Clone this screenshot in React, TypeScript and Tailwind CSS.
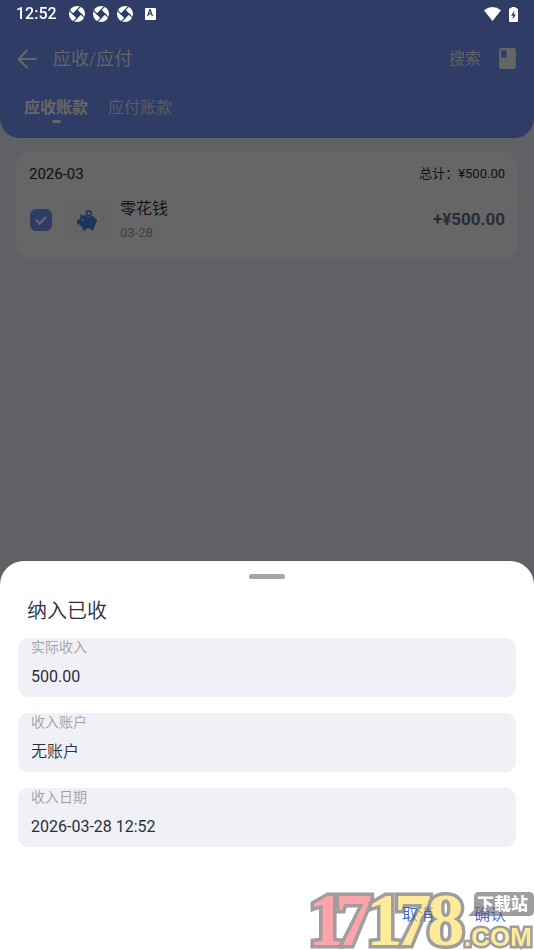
import { useState } from "react";
import { MdBook } from "react-icons/md";

interface Entry {
  id: string;
  name: string;
  date: string;
  amount: string;
}

const entries: Entry[] = [{ id: "e1", name: "零花钱", date: "03-28", amount: "+¥500.00" }];

const tabs = ["应收账款", "应付账款"];

function ApertureIcon() {
  return (
    <svg viewBox="0 0 16 16" className="size-4" aria-hidden="true">
      <circle cx="8" cy="8" r="8" fill="#fff" />
      <path d="M8 3.2 L12.8 8 L8 12.8 L3.2 8 Z" fill="#2f3c66" />
      <g stroke="#2f3c66" strokeWidth="1.1">
        <path d="M8 4 L11.6 0.4" />
        <path d="M12 8 L15.6 11.6" />
        <path d="M8 12 L4.4 15.6" />
        <path d="M4 8 L0.4 4.4" />
      </g>
    </svg>
  );
}

function StatusBar() {
  return (
    <div className="fixed inset-x-0 top-0 z-20 flex h-7 items-center pl-4 pr-4 text-white">
      <span className="text-base font-medium">12:52</span>
      <div className="ml-3 flex items-center gap-2">
        <ApertureIcon />
        <ApertureIcon />
        <ApertureIcon />
      </div>
      <span className="ml-3 flex h-3 w-[11px] items-center justify-center rounded-[1px] bg-white text-[9px] font-bold text-[#2f3c66]">
        A
      </span>
      <svg viewBox="0 0 17 14" className="ml-auto h-[14px] w-[17px]" aria-hidden="true">
        <path d="M8.5 14 L0 3.2 Q8.5 -3 17 3.2 Z" fill="#fff" />
      </svg>
      <svg viewBox="0 0 9 15" className="ml-2 h-[15px] w-[9px]" aria-hidden="true">
        <path d="M2.5 0 H6.5 V1.2 H8 Q9 1.2 9 2.2 V14 Q9 15 8 15 H1 Q0 15 0 14 V2.2 Q0 1.2 1 1.2 H2.5 Z" fill="#fff" />
        <path d="M5.6 3.6 L2 8.8 H4.1 L3.4 12.6 L7 7.4 H4.9 Z" fill="#2f3c66" />
      </svg>
    </div>
  );
}

function PiggyIcon() {
  return (
    <svg viewBox="0 0 20 21" className="h-[21px] w-5" aria-hidden="true">
      <circle cx="11.8" cy="3.4" r="2.4" fill="none" stroke="#4d88e6" strokeWidth="2" />
      <path
        d="M3 4.2 L6.2 5.8 Q8 5 9.4 5.4 Q10.4 7.4 12.4 7.3 Q14.2 7.2 15 5.8 Q17.6 6.6 18.4 9 Q20 9.2 20 10.8 Q20 12.4 19 12.6 Q18.6 15.6 16.8 17.2 V19.4 Q16.8 20.4 15.8 20.4 H14.4 L13.6 18.6 H9 L8.4 20.4 H6.8 Q5.8 20.4 5.7 19.4 L5.2 17.2 Q3.8 16.4 2.8 14.8 L0.8 14 Q0 13.6 0 12.8 V10.8 Q0 10 0.8 10 L2.2 9.6 Q2.6 8.2 3.6 7.4 Z"
        fill="#3f83ee"
      />
      <circle cx="5.8" cy="10" r="0.9" fill="#d8e6ff" />
    </svg>
  );
}

function Header() {
  const [active, setActive] = useState(0);

  return (
    <header className="rounded-b-[20px] bg-[#7696ff] pt-7 text-white">
      <div className="flex h-[61px] items-center pl-[17px] pr-[14px]">
        <button type="button" aria-label="返回">
          <svg viewBox="0 0 20 20" className="size-5" fill="none" stroke="currentColor" strokeWidth="2" aria-hidden="true">
            <path d="M10 1.5 L1.5 10 L10 18.5 M1.5 10 H19" strokeLinecap="round" strokeLinejoin="round" />
          </svg>
        </button>
        <h1 className="ml-4 text-lg font-[350]">应收/应付</h1>
        <button type="button" className="ml-auto text-base font-[350] text-white/90">搜索</button>
        <button type="button" aria-label="账本" className="ml-[14px]">
          <MdBook size={25} />
        </button>
      </div>
      <div className="flex gap-5 px-6 pt-[7px] pb-[15px]">
        {tabs.map((tab, i) => (
          <button
            key={tab}
            type="button"
            onClick={() => setActive(i)}
            className={`flex flex-col items-center text-base leading-6 ${i === active ? "font-bold" : "font-[350] text-white/80"}`}
          >
            {tab}
            {i === active && <span className="h-[3px] w-[9px] rounded-full bg-white" />}
          </button>
        ))}
      </div>
    </header>
  );
}

function MonthCard() {
  return (
    <section className="mx-4 mt-[13px] rounded-[18px] bg-white px-[13px] pt-[13px] pb-4 text-[#272a36]">
      <div className="flex h-5 items-center justify-between">
        <h2 className="text-[15px]">2026-03</h2>
        <p className="text-[13px]">总计：¥500.00</p>
      </div>
      {entries.map((e) => (
        <div key={e.id} className="mt-[13px] flex items-center">
          <label className="relative ml-px flex size-[22px]">
            <input
              type="checkbox"
              defaultChecked
              aria-label={e.name}
              className="peer size-[22px] appearance-none rounded-md bg-[#c8cede] checked:bg-[#7696ff]"
            />
            <svg viewBox="0 0 22 22" className="pointer-events-none absolute inset-0 hidden peer-checked:block" aria-hidden="true">
              <path d="M6 11 L9.6 14.6 L16 8" fill="none" stroke="#fff" strokeWidth="2.4" />
            </svg>
          </label>
          <div className="ml-[15px] flex size-10 items-center justify-center rounded-xl bg-[#fafafa]">
            <PiggyIcon />
          </div>
          <div className="ml-[13px]">
            <p className="text-base leading-6 font-[350]">{e.name}</p>
            <p className="mt-[2px] text-[13px] leading-5 text-[#a0a0a0]">{e.date}</p>
          </div>
          <p className="ml-auto text-[17px] font-bold text-[#667085]">{e.amount}</p>
        </div>
      ))}
    </section>
  );
}

const fieldBox = "flex flex-col rounded-[10px] bg-[#f0f1f6] px-[13px] pb-2";
const fieldLabel = "text-[14px] leading-[18px] font-[350] text-[#a0a0a0]";
const fieldInput = "mt-[9px] h-6 w-full appearance-none bg-transparent text-base leading-6 text-[#2b2e3a] outline-none";

function ReceiveSheet() {
  return (
    <div role="dialog" aria-labelledby="sheet-title" className="relative rounded-t-[24px] bg-white px-[18px] pt-[13px] pb-[21px]">
      <div className="mx-auto h-[5px] w-9 rounded-full bg-[#a5a5a5]" />
      <h2 id="sheet-title" className="mt-[18px] px-[9px] text-xl leading-7 font-[350] text-[#2b2e3a]">纳入已收</h2>
      <form className="mt-[13px] flex flex-col gap-4" onSubmit={(e) => e.preventDefault()}>
        <div className={fieldBox}>
          <label htmlFor="amount" className={fieldLabel}>实际收入</label>
          <input id="amount" defaultValue="500.00" inputMode="decimal" className={fieldInput} />
        </div>
        <div className={fieldBox}>
          <label htmlFor="account" className={fieldLabel}>收入账户</label>
          <select id="account" className={`${fieldInput} font-[350]`}>
            <option>无账户</option>
          </select>
        </div>
        <div className={fieldBox}>
          <label htmlFor="date" className={fieldLabel}>收入日期</label>
          <input id="date" defaultValue="2026-03-28 12:52" className={fieldInput} />
        </div>
        <div className="mt-[38px] flex h-7 items-center justify-end gap-10 pr-[10px] text-base font-[350] text-[#3d66f0]">
          <button type="button">取消</button>
          <button type="submit">确认</button>
        </div>
      </form>
      <SiteMark />
    </div>
  );
}

function SiteMark() {
  return (
    <svg viewBox="0 0 224 62" className="pointer-events-none absolute right-0 bottom-0 h-[62px] w-56 overflow-visible opacity-60">
      <text
        y="57"
        x="-2 25 56 84 117"
        fill="#fcde58"
        stroke="#5f5c5c"
        strokeWidth="7"
        paintOrder="stroke"
        fontFamily="'Liberation Serif', serif"
        fontWeight="700"
        fontSize="75"
      >
        <tspan fill="#fc6775">17</tspan>178
      </text>
      <path d="M169 4 H219 Q224 4 224 9 V23 Q224 28 219 28 H158 L164 22 V9 Q164 4 169 4 Z" fill="#5f5c5c" />
      <text x="167" y="22" fill="#fff" fontFamily="'Noto Sans CJK SC', sans-serif" fontWeight="900" fontSize="17">下载站</text>
      <text
        x="154"
        y="58"
        fill="#fcde58"
        stroke="#5f5c5c"
        strokeWidth="5"
        paintOrder="stroke"
        fontFamily="'Liberation Sans', sans-serif"
        fontWeight="700"
        fontSize="26"
      >
        .COM
      </text>
    </svg>
  );
}

export default function App() {
  return (
    <div className="min-h-screen bg-[#eef2fa] font-[Roboto,'Noto_Sans_CJK_SC',sans-serif]">
      <StatusBar />
      <Header />
      <main>
        <MonthCard />
      </main>
      <div className="fixed inset-0 z-10 flex flex-col justify-end bg-black/60">
        <ReceiveSheet />
      </div>
    </div>
  );
}
